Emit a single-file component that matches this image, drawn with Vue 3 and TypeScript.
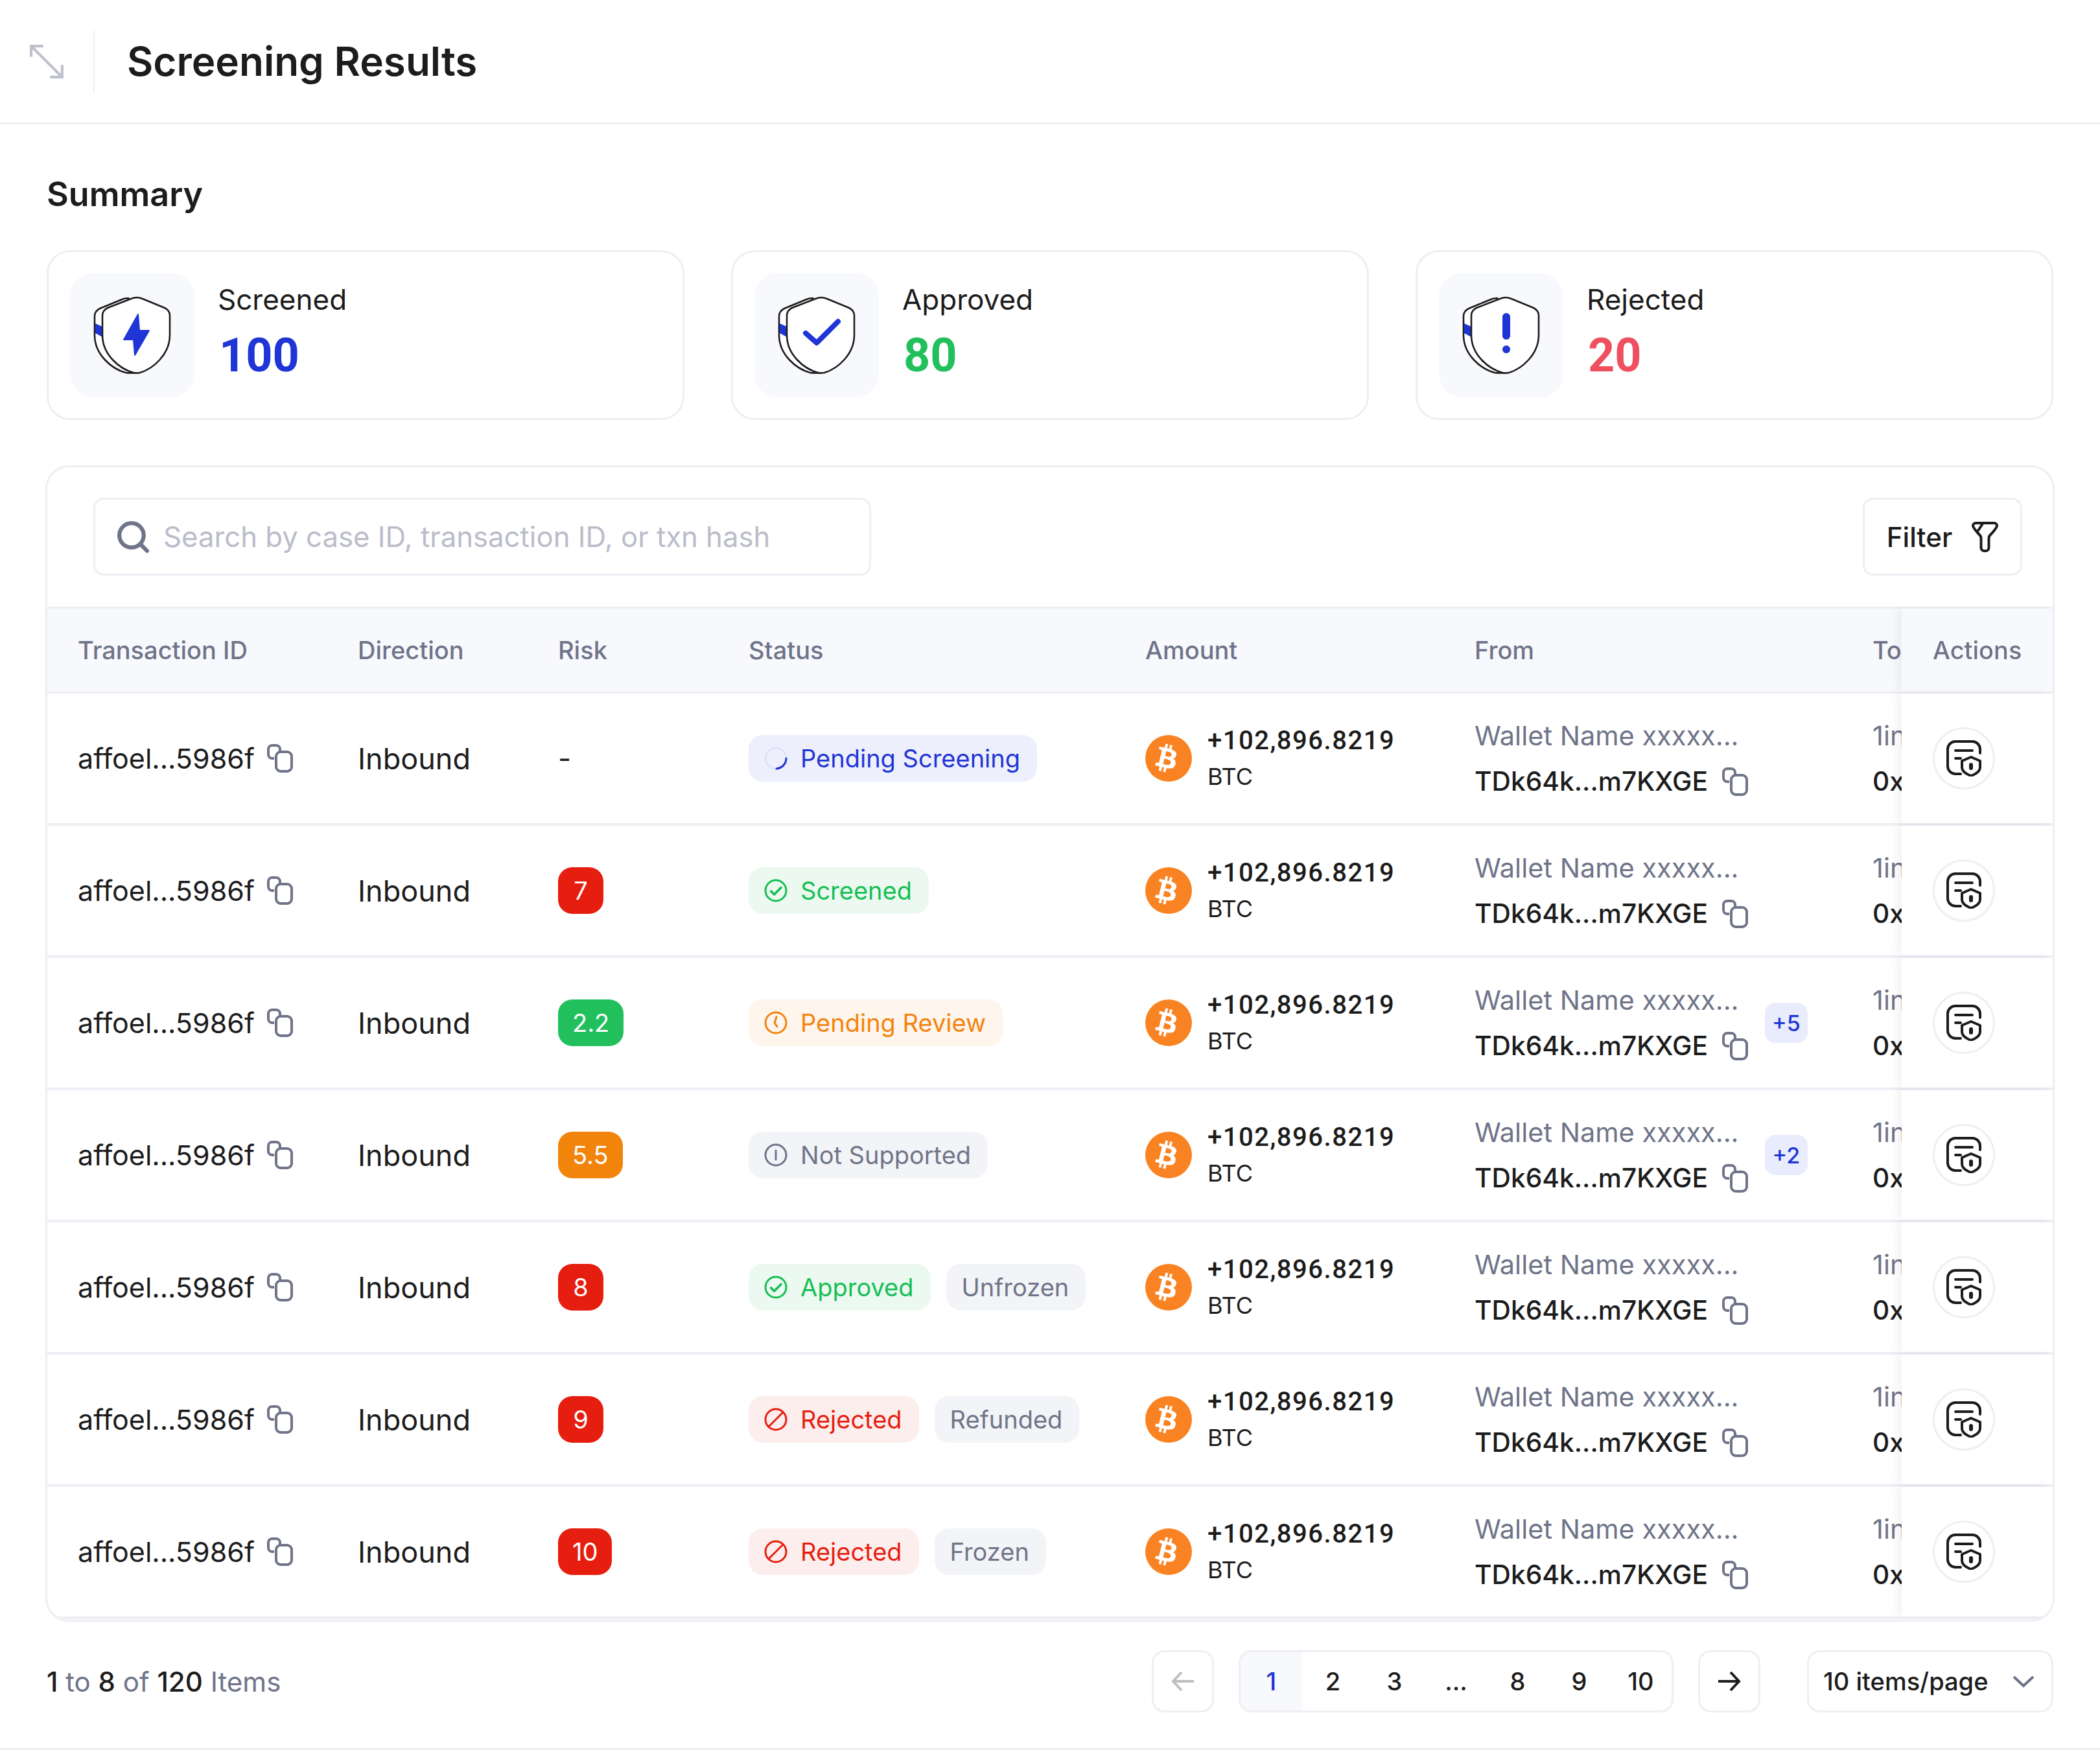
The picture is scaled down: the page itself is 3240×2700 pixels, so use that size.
<script setup lang="ts">
type Status = { label: string; kind: 'pending' | 'ok' | 'review' | 'muted' | 'bad'; icon: string }

interface Row {
  risk: string
  riskColor: string
  status: Status
  extra?: string
  more?: string
}

const approved: Status = { label: 'Approved', kind: 'ok', icon: 'check' }
const rejected: Status = { label: 'Rejected', kind: 'bad', icon: 'ban' }

const rows: Row[] = [
  { risk: '-', riskColor: '', status: { label: 'Pending Screening', kind: 'pending', icon: 'spin' } },
  { risk: '7', riskColor: 'red', status: { label: 'Screened', kind: 'ok', icon: 'check' } },
  { risk: '2.2', riskColor: 'green', status: { label: 'Pending Review', kind: 'review', icon: 'clock' }, more: '+5' },
  { risk: '5.5', riskColor: 'orange', status: { label: 'Not Supported', kind: 'muted', icon: 'info' }, more: '+2' },
  { risk: '8', riskColor: 'red', status: approved, extra: 'Unfrozen' },
  { risk: '9', riskColor: 'red', status: rejected, extra: 'Refunded' },
  { risk: '10', riskColor: 'red', status: rejected, extra: 'Frozen' },
]

const cards = [
  { label: 'Screened', value: '100', tone: 'blue', mark: 'bolt' },
  { label: 'Approved', value: '80', tone: 'green', mark: 'check' },
  { label: 'Rejected', value: '20', tone: 'rose', mark: 'alert' },
]

const pages = ['1', '2', '3', '...', '8', '9', '10']
</script>

<template>
  <div class="page">
    <header class="topbar">
      <svg class="expand" viewBox="0 0 50 50" fill="none" stroke="#bfc2cd" stroke-width="4">
        <path d="M2 18V2h18M2 2l46 46M30 48h18V30" />
      </svg>
      <h1>Screening Results</h1>
    </header>

    <main class="content">
      <h2>Summary</h2>
      <section class="cards">
        <div v-for="card in cards" :key="card.label" class="card">
          <div class="tile">
            <svg viewBox="0 0 120 120" width="120" height="120" fill="none">
              <path d="M54 3 Q48 3 44 5 L10 19 Q2 23 2 31 V60 C2 90 28 112 50 118 Q56 119 68 118 Z" fill="#fff" stroke="#1c1c1c" stroke-width="2.6" />
              <path d="M3 42 14 47V63L3 57Z" fill="#1f35d6" />
              <path d="M67 2 Q71 2 76 4 L110 18 Q118 22 118 30 V60 C118 90 92 112 72 118 Q67 119 62 118 C40 112 14 90 14 60 V30 Q14 22 22 18 L58 4 Q63 2 67 2Z" fill="#fff" stroke="#1c1c1c" stroke-width="2.6" />
              <path v-if="card.mark === 'bolt'" d="M69 28 47 67H62L64 91 86 53H71Z" fill="#1f35d6" stroke="#1f35d6" stroke-width="2" stroke-linejoin="round" />
              <path v-else-if="card.mark === 'check'" d="M43 57 60 72 93 39" stroke="#1f35d6" stroke-width="8" stroke-linecap="round" stroke-linejoin="round" />
              <g v-else fill="#1f35d6">
                <rect x="62" y="26" width="12" height="41" rx="6" />
                <circle cx="68" cy="82" r="6" />
              </g>
            </svg>
          </div>
          <div class="card-text">
            <span class="card-label">{{ card.label }}</span>
            <strong :class="['card-value', card.tone]">{{ card.value }}</strong>
          </div>
        </div>
      </section>

      <section class="panel">
        <div class="toolbar">
          <div class="search">
            <svg viewBox="0 0 48 48" width="50" height="50" fill="none" stroke="#6f7489" stroke-width="6" stroke-linecap="round">
              <circle cx="22" cy="22" r="18" />
              <path d="M36 36l9 9" />
            </svg>
            <span>Search by case ID, transaction ID, or txn hash</span>
          </div>
          <button class="filter">
            Filter
            <svg viewBox="0 0 41 47" width="41" height="47" fill="none" stroke="#1c1c1c" stroke-width="4" stroke-linejoin="round" stroke-linecap="round">
              <path d="M6 2h29a4 4 0 0 1 3.600 5.600C36 13 32 17 28.500 20.500 27 22 26.500 23 26.500 25v15a5 5 0 0 1-5 5h-2a5 5 0 0 1-5-5V25c0-2-.5-3-2-4.500C9 17 5 13 2.400 7.600A4 4 0 0 1 6 2Z" />
              <path d="M17 3 9 15" />
            </svg>
          </button>
        </div>

        <div class="scroller">
          <div class="grid head">
            <div class="cell">Transaction ID</div>
            <div class="cell">Direction</div>
            <div class="cell">Risk</div>
            <div class="cell">Status</div>
            <div class="cell">Amount</div>
            <div class="cell">From</div>
            <div class="cell">To</div>
            <div class="cell actions">Actions</div>
          </div>
          <div v-for="(row, i) in rows" :key="i" class="grid row">
            <div class="cell tx">
              affoel...5986f
              <svg class="copy" viewBox="0 0 40 44" fill="none" stroke="#6f7489" stroke-width="4">
                <path d="M11 22H8a6 6 0 0 1-6-6V8a6 6 0 0 1 6-6h6a6 6 0 0 1 6 6v3" />
                <rect x="14" y="12" width="24" height="30" rx="7" />
              </svg>
            </div>
            <div class="cell dir">Inbound</div>
            <div class="cell">
              <span v-if="row.riskColor" :class="['risk', row.riskColor]">{{ row.risk }}</span>
              <span v-else>{{ row.risk }}</span>
            </div>
            <div class="cell status-cell">
              <span :class="['badge', row.status.kind]">
                <svg viewBox="0 0 36 36" width="36" height="36" fill="none" stroke="currentColor" stroke-width="3" stroke-linecap="round" stroke-linejoin="round">
                  <template v-if="row.status.icon === 'spin'">
                    <circle cx="18" cy="18" r="16" stroke="#dfe2f8" />
                    <path d="M34 18c0 8-6 15-15 16" />
                  </template>
                  <template v-else>
                    <circle cx="18" cy="18" r="16" />
                    <path v-if="row.status.icon === 'check'" d="M10.500 19l5 5L26 13.500" stroke-width="3.600" />
                    <path v-else-if="row.status.icon === 'ban'" d="M7 29 29 7" />
                    <path v-else-if="row.status.icon === 'clock'" d="M19 9l-3 9 4 6" />
                    <path v-else d="M18 11v14" />
                  </template>
                </svg>
                {{ row.status.label }}
              </span>
              <span v-if="row.extra" class="badge muted">{{ row.extra }}</span>
            </div>
            <div class="cell amount">
              <svg class="coin" viewBox="0 0 72 72">
                <circle cx="36" cy="36" r="36" fill="#f98322" />
                <path d="M48 31c.8-4.600-2.800-7-7.600-8.700l1.600-6.300-3.800-1-1.500 6.200-3-.7 1.500-6.200-3.800-.9-1.600 6.300-7.700-1.900-1 4.100s2.800.6 2.800.7c1.500.4 1.800 1.400 1.700 2.200l-4.300 17.200c-.2.500-.7 1.200-1.800.9 0 .1-2.800-.7-2.800-.7l-1.900 4.400 7.400 1.800-1.600 6.400 3.800.9 1.600-6.300 3 .8-1.600 6.300 3.800.9 1.600-6.400c6.500 1.200 11.400.7 13.400-5.100 1.700-4.700 0-7.400-3.500-9.200 2.500-.6 4.400-2.200 4.900-5.700Zm-8.700 12.200c-1.200 4.700-9.200 2.200-11.800 1.500l2.100-8.400c2.600.7 10.900 2 9.700 6.900Zm1.200-12.300c-1.100 4.300-7.800 2.100-9.900 1.600l1.900-7.600c2.200.5 9.100 1.500 8 6Z" fill="#fff" />
              </svg>
              <div class="amount-text">
                <span class="num">+102,896.8219</span>
                <span class="sym">BTC</span>
              </div>
            </div>
            <div class="cell party">
              <div class="party-text">
                <span class="wallet">Wallet Name xxxxx...</span>
                <span class="addr">
                  TDk64k...m7KXGE
                  <svg class="copy" viewBox="0 0 40 44" fill="none" stroke="#6f7489" stroke-width="4">
                    <path d="M11 22H8a6 6 0 0 1-6-6V8a6 6 0 0 1 6-6h6a6 6 0 0 1 6 6v3" />
                    <rect x="14" y="12" width="24" height="30" rx="7" />
                  </svg>
                </span>
              </div>
              <span v-if="row.more" class="more">{{ row.more }}</span>
            </div>
            <div class="cell party">
              <div class="party-text">
                <span class="wallet">1inch Wallet xxxxx...</span>
                <span class="addr">0x7a25...f2488D</span>
              </div>
            </div>
            <div class="cell actions">
              <button class="round">
                <svg viewBox="0 0 54 56" width="54" height="56" fill="none" stroke="#1c1c1c" stroke-width="4" stroke-linecap="round" stroke-linejoin="round">
                  <path d="M52 20v-6A12 12 0 0 0 40 2H14A12 12 0 0 0 2 14v26a12 12 0 0 0 12 12h8" />
                  <path d="M14 16h26M14 28h8" />
                  <path d="M38 26l14 6v10c0 6-6 10-14 13-8-3-14-7-14-13V32Z" />
                  <path d="M38 38v5" stroke-width="6" />
                </svg>
              </button>
            </div>
          </div>
        </div>
      </section>

      <footer class="pager">
        <div class="count"><b>1</b> to <b>8</b> of <b>120</b> Items</div>
        <div class="pager-side">
          <button class="square">
            <svg viewBox="0 0 36 32" width="36" height="32" fill="none" stroke="#bfbfbf" stroke-width="4">
              <path d="M16 2 3 16l13 14M3 16h32" />
            </svg>
          </button>
          <div class="pages">
            <span v-for="(p, i) in pages" :key="p" :class="['pg', { on: i === 0 }]">{{ p }}</span>
          </div>
          <button class="square">
            <svg viewBox="0 0 36 32" width="36" height="32" fill="none" stroke="#1c1c1c" stroke-width="4">
              <path d="M20 2l13 14-13 14M33 16H1" />
            </svg>
          </button>
          <div class="per-page">
            10 items/page
            <svg viewBox="0 0 34 20" width="34" height="20" fill="none" stroke="#6f7489" stroke-width="4">
              <path d="M2 3l15 14L32 3" />
            </svg>
          </div>
        </div>
      </footer>
    </main>
  </div>
</template>

<style>
html,
body {
  margin: 0;
  background: #fff;
}
</style>

<style scoped>
.page {
  width: 3240px;
  height: 2700px;
  box-sizing: border-box;
  border-bottom: 3px solid #eeeef4;
  font-family: Inter, 'Noto Sans', sans-serif;
  color: #1c1c1c;
  overflow: hidden;
}
.topbar {
  height: 192px;
  box-sizing: border-box;
  border-bottom: 3px solid #eeeef4;
  display: flex;
  align-items: center;
  padding-left: 46px;
}
.expand {
  width: 52px;
  height: 52px;
}
.topbar h1 {
  margin: 0 0 0 46px;
  padding-left: 50px;
  height: 96px;
  line-height: 96px;
  border-left: 2px solid #eeeef4;
  font-size: 62px;
  font-weight: 600;
  letter-spacing: 0;
}
.content {
  padding: 0 72px;
}
h2 {
  margin: 0;
  padding-top: 80px;
  height: 194px;
  box-sizing: border-box;
  line-height: 56px;
  font-size: 52px;
  font-weight: 600;
}
.cards {
  display: grid;
  grid-template-columns: repeat(3, 984px);
  gap: 72px;
}
.card {
  height: 262px;
  box-sizing: border-box;
  border: 3px solid #eeeef4;
  border-radius: 36px;
  display: flex;
  align-items: center;
  padding-left: 33px;
  gap: 36px;
}
.tile {
  width: 192px;
  height: 192px;
  border-radius: 36px;
  background: #f8f9fd;
  display: flex;
  align-items: center;
  justify-content: center;
}
.card-text {
  display: flex;
  flex-direction: column;
  gap: 22px;
  padding-bottom: 18px;
}
.card-label {
  font-size: 44px;
  line-height: 60px;
}
.card-value {
  font-family: Roboto, sans-serif;
  font-size: 72px;
  line-height: 70px;
  font-weight: 700;
  padding-left: 2px;
}
.blue {
  color: #1f35d6;
}
.green {
  color: #22c05c;
}
.rose {
  color: #ef5060;
}
.panel {
  margin: 70px -2px 0;
  width: 3100px;
  height: 1784px;
  box-sizing: border-box;
  border: 3px solid #eeeef4;
  border-radius: 36px;
  overflow: hidden;
}
.toolbar {
  height: 215px;
  box-sizing: border-box;
  padding: 47px 47px 0 71px;
  display: flex;
  justify-content: space-between;
  align-items: flex-start;
}
.search {
  width: 1200px;
  height: 120px;
  box-sizing: border-box;
  border: 3px solid #eeeef4;
  border-radius: 16px;
  display: flex;
  align-items: center;
  gap: 22px;
  padding-left: 33px;
  font-size: 43.7px;
  color: #babdc9;
}
.filter {
  width: 246px;
  height: 120px;
  box-sizing: border-box;
  border: 3px solid #eeeef4;
  border-radius: 16px;
  background: #fff;
  font: inherit;
  font-size: 42px;
  font-weight: 500;
  color: #1c1c1c;
  display: flex;
  align-items: center;
  justify-content: center;
  gap: 30px;
}
.scroller {
  overflow: hidden;
}
.grid {
  display: grid;
  grid-template-columns: 432px 309px 294px 612px 508px 614px 700px 233px;
  width: max-content;
}
.head {
  height: 134px;
  box-sizing: border-box;
  background: #f8f9fd;
  border-top: 3px solid #eeeef4;
  border-bottom: 3px solid #eeeef4;
  font-size: 38px;
  font-weight: 500;
  color: #6f7489;
}
.row {
  height: 204px;
  box-sizing: border-box;
  border-bottom: 4px solid #eeeef4;
  font-size: 44px;
}
.cell {
  display: flex;
  align-items: center;
  padding-left: 47px;
  white-space: nowrap;
}
.actions {
  position: sticky;
  right: 0;
  background: inherit;
  padding-left: 48px;
  box-shadow: -8px 0 12px rgba(30, 30, 60, 0.05);
}
.row .actions {
  background: #fff;
}
.tx {
  gap: 19px;
  font-size: 43px;
}
.dir {
  font-size: 45px;
}
.copy {
  width: 40px;
  height: 44px;
  flex: none;
}
.risk {
  min-width: 70px;
  height: 72px;
  box-sizing: border-box;
  padding: 0 22px;
  border-radius: 22px;
  display: inline-flex;
  align-items: center;
  justify-content: center;
  color: #fff;
  font-size: 38px;
}
.risk.red {
  background: #e61e10;
}
.risk.green {
  background: #22c05c;
  color: #fff;
}
.risk.orange {
  background: #f2840c;
}
.status-cell {
  gap: 24px;
}
.badge {
  height: 72px;
  box-sizing: border-box;
  padding: 0 26px 0 24px;
  border-radius: 22px;
  display: inline-flex;
  align-items: center;
  gap: 20px;
  font-size: 38px;
  font-weight: 400;
}
.badge.pending {
  background: #edeffc;
  color: #1f35d6;
}
.badge.ok {
  background: #ebf9f0;
  color: #16bf55;
}
.badge.review {
  background: #fef5ec;
  color: #f5830f;
}
.badge.muted {
  background: #f3f4f7;
  color: #6f7489;
}
.badge.bad {
  background: #fdeeee;
  color: #e61e10;
}
.amount {
  gap: 24px;
}
.coin {
  width: 72px;
  height: 72px;
  flex: none;
}
.amount-text,
.party-text {
  display: flex;
  flex-direction: column;
}
.num {
  font-family: Roboto, sans-serif;
  font-weight: 500;
  font-size: 40px;
  letter-spacing: 1.5px;
  line-height: 56px;
}
.sym {
  font-size: 36px;
  line-height: 54px;
}
.party {
  gap: 26px;
}
.wallet {
  color: #6f7489;
  font-size: 41.5px;
  line-height: 72px;
}
.addr {
  display: flex;
  align-items: center;
  gap: 22px;
  font-size: 40.700px;
  font-weight: 500;
  line-height: 70px;
}
.more {
  width: 66px;
  height: 62px;
  border-radius: 16px;
  background: #e9ecfc;
  color: #1f35d6;
  font-size: 34px;
  font-weight: 500;
  display: flex;
  align-items: center;
  justify-content: center;
}
.round {
  width: 96px;
  height: 96px;
  padding: 0;
  box-sizing: border-box;
  border: 3px solid #eeeef4;
  border-radius: 50%;
  background: #fff;
  display: flex;
  align-items: center;
  justify-content: center;
}
.pager {
  margin-top: 44px;
  display: flex;
  align-items: center;
  justify-content: space-between;
}
.count {
  font-size: 42px;
  color: #6f7489;
}
.count b {
  font-weight: 500;
  color: #1c1c1c;
}
.pager-side {
  display: flex;
  align-items: center;
  gap: 38px;
}
.square {
  width: 96px;
  height: 96px;
  padding: 0;
  box-sizing: border-box;
  border: 3px solid #eeeef4;
  border-radius: 20px;
  background: #fff;
  display: flex;
  align-items: center;
  justify-content: center;
}
.pages {
  height: 96px;
  box-sizing: border-box;
  border: 3px solid #eeeef4;
  border-radius: 20px;
  display: flex;
  overflow: hidden;
}
.pg {
  width: 95px;
  display: flex;
  align-items: center;
  justify-content: center;
  font-size: 38px;
  font-weight: 500;
}
.pg.on {
  background: #f8f9fd;
  color: #1f35d6;
}
.per-page {
  width: 380px;
  height: 96px;
  margin-left: 34px;
  box-sizing: border-box;
  border: 3px solid #eeeef4;
  border-radius: 20px;
  display: flex;
  align-items: center;
  justify-content: space-between;
  padding: 0 26px 0 22px;
  font-size: 38px;
  font-weight: 500;
}
</style>
